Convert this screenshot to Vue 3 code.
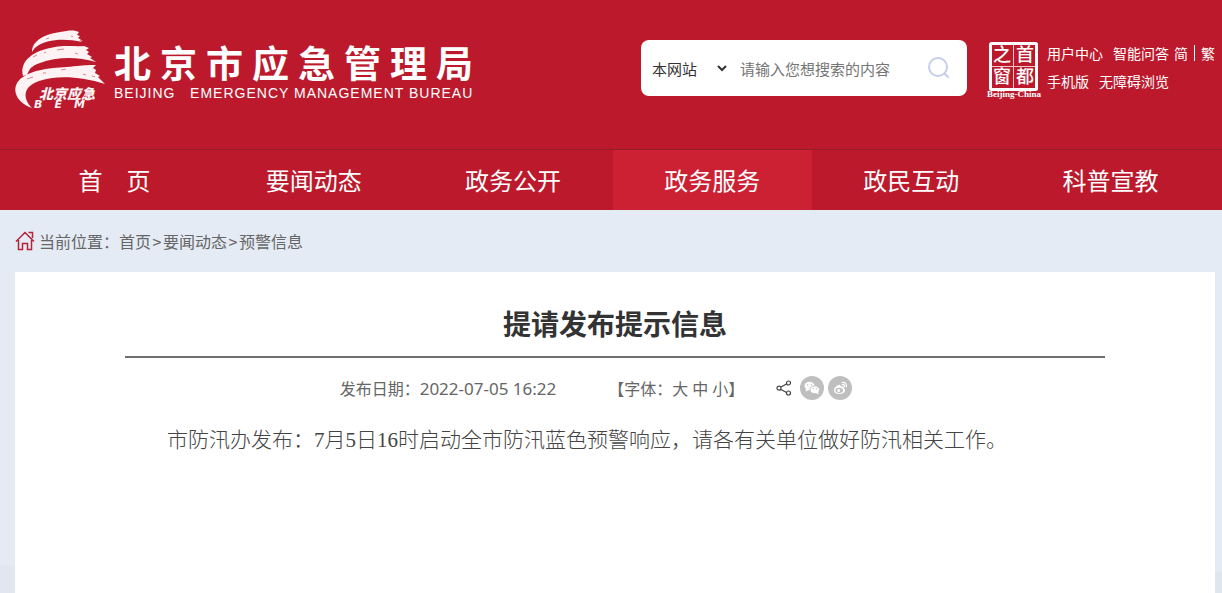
<script setup>
import { ref } from 'vue'

const navItems = ['首\u3000页', '要闻动态', '政务公开', '政务服务', '政民互动', '科普宣教']
const activeItem = '政务服务'
const keyword = ref('')
const scope = ref('site')
</script>

<template>
  <div class="page">
    <header class="header">
      <div class="wrap masthead">
        <a class="brand" href="#">
          <svg class="emblem" viewBox="0 0 90 80" aria-hidden="true">
            <path d="M17 22C17 10 31 4 45 2C52 1 56 0 61 1L64 2L62 5L65 6L63 8L68 11L64 10L67 12C50 8 31 9 21 17C19 19 18 20 17 22Z" />
            <path d="M8 46C4 30 20 20 40 17C51 15 60 17 69 16L74 18L71 20L74 22L72 24L77 27L75 28L81 32C61 26 41 27 25 33C13 37 14 42 12 45Z" />
            <path d="M17 78C-1 72-5 55 8 47C23 37 45 38 62 36C70 35 75 35 81 35L78 38L81 40L80 43L85 46L83 47L90 54C66 46 40 45 24 51C7 57 8 69 17 78Z" />
            <path class="scratches" d="M31 9L34 8M56 6L58 7M18 27L22 25M29 23L31 22M42 20L49 19M60 23L63 24M12 49L18 47M28 43L31 43M46 40L51 39M68 44L71 45M77 46L80 47" />
            <text class="emblem-cn" x="24" y="69">北京应急</text>
            <text class="emblem-en" x="19" y="78">BEM</text>
          </svg>
          <span class="brand-text">
            <span class="brand-cn">北京市应急管理局</span>
            <span class="brand-en">BEIJING &nbsp; EMERGENCY MANAGEMENT BUREAU</span>
          </span>
        </a>

        <form class="search" role="search" @submit.prevent>
          <select v-model="scope" class="scope" aria-label="搜索范围">
            <option value="site">本网站</option>
          </select>
          <input v-model="keyword" class="keyword" type="text" placeholder="请输入您想搜索的内容" aria-label="搜索内容" />
          <button class="search-btn" type="submit" aria-label="搜索">
            <svg viewBox="0 0 24 24" width="24" height="24">
              <circle cx="11" cy="11" r="9" />
              <path d="M17.500 17.500L21 21" />
            </svg>
          </button>
        </form>

        <a class="seal" href="#" aria-label="首都之窗">
          <svg viewBox="0 0 56 60" width="56" height="60">
            <rect x="4.500" y="3.500" width="46" height="46" rx="1" class="frame" />
            <path d="M27.500 5V48M6 26.500H49" class="cross" />
            <g class="seal-cn">
              <text x="16" y="21">之</text>
              <text x="39" y="21">首</text>
              <text x="16" y="43">窗</text>
              <text x="39" y="43">都</text>
            </g>
            <text class="seal-en" x="28" y="57">Beijing-China</text>
          </svg>
        </a>

        <div class="tools">
          <div class="tool-row">
            <a href="#">用户中心</a>
            <a href="#" class="spaced">智能问答</a>
            <span class="lang"><a href="#">简</a><i class="bar"></i><a href="#">繁</a></span>
          </div>
          <div class="tool-row">
            <a href="#">手机版</a>
            <a href="#" class="spaced">无障碍浏览</a>
          </div>
        </div>
      </div>

      <nav class="nav">
        <div class="wrap nav-list">
          <a v-for="item in navItems" :key="item" href="#" :class="{ active: item === activeItem }">{{ item }}</a>
        </div>
      </nav>
    </header>

    <main class="wrap main">
      <div class="crumbs">
        <svg viewBox="0 0 20 20" width="20" height="20" aria-hidden="true">
          <path d="M1 10.500L10 1.500L19 10.500M3.500 9V18.500H7.500V12.500H12.500V18.500H16.500V9M13.500 1.500H17.500V7" />
        </svg>
        <span>当前位置：</span>
        <a href="#">首页</a><span class="sep">&gt;</span><a href="#">要闻动态</a><span class="sep">&gt;</span><a href="#">预警信息</a>
      </div>

      <article class="article">
        <h1>提请发布提示信息</h1>
        <div class="meta">
          <span class="date">发布日期：<time>2022-07-05 16:22</time></span>
          <span class="sizes">【字体：<button type="button">大</button><button type="button">中</button><button type="button">小</button>】</span>
          <span class="share">
            <svg class="share-icon" viewBox="0 0 16 16" width="16" height="16" aria-hidden="true">
              <path d="M5 7L10.500 4M5 9.500L10.500 12.500" />
              <circle cx="3" cy="8.200" r="2" />
              <circle cx="12.500" cy="3" r="2" />
              <circle cx="12.500" cy="13" r="2" />
            </svg>
            <button type="button" class="round" aria-label="分享到微信">
              <svg viewBox="0 0 24 24" width="24" height="24">
                <ellipse cx="9.500" cy="10" rx="5" ry="4.200" />
                <path d="M6 13L5.500 15.500L9 14Z" />
                <ellipse cx="14.800" cy="13.800" rx="4.800" ry="4" class="front" />
                <path d="M16 17L18.500 18.500L18 15.500Z" />
                <g class="eyes">
                  <circle cx="7.700" cy="8.800" r=".7" />
                  <circle cx="11.500" cy="8.800" r=".7" />
                  <circle cx="13.200" cy="12.700" r=".6" />
                  <circle cx="16.500" cy="12.700" r=".6" />
                </g>
              </svg>
            </button>
            <button type="button" class="round" aria-label="分享到微博">
              <svg viewBox="0 0 24 24" width="24" height="24">
                <path d="M6 14.500C6 11.500 10.500 7.500 12.300 9C13 9.500 12.500 10.500 12.500 10.800C14.500 10 16.200 10.200 15.500 12.200C19 13.200 17 18 11.500 18C8 18 6 16.500 6 14.500Z" />
                <ellipse cx="11.200" cy="14.300" rx="3.800" ry="2.600" class="gray" />
                <circle cx="10.700" cy="14.500" r="1.500" />
                <path d="M14 6.500C17 5.800 19.200 8.200 18.200 11M14.300 8.500C16 8.300 16.800 9.300 16.400 10.700" class="wave" />
              </svg>
            </button>
          </span>
        </div>
        <p>市防汛办发布：7月5日16时启动全市防汛蓝色预警响应，请各有关单位做好防汛相关工作。</p>
      </article>
    </main>
  </div>
</template>

<style>
body {
  background: #e4ebf4;
}
</style>

<style scoped>
.page {
  min-height: 100vh;
  display: flex;
  flex-direction: column;
  color: #666;
  font-family: "Noto Sans CJK SC", sans-serif;
  font-size: 16px;
}

.page * {
  box-sizing: border-box;
}

a {
  color: inherit;
  text-decoration: none;
}

button,
select,
input {
  font-family: inherit;
  border: 0;
  background: none;
  color: inherit;
}

button {
  padding: 0;
  cursor: pointer;
}

svg {
  display: block;
  flex: none;
}

.wrap {
  width: 100%;
  max-width: 1222px;
  margin: 0 auto;
  padding: 0 7px 0 15px;
}

.header {
  background: #bc1a2c;
  color: #fff;
}

.masthead {
  display: flex;
  align-items: flex-start;
  height: 149px;
}

.brand {
  display: flex;
  margin-top: 30px;
}

.emblem {
  width: 90px;
  height: 80px;
  overflow: visible;
  fill: #fdf3f4;
}

.scratches {
  stroke: #bc1a2c;
  stroke-width: 0.5;
  fill: none;
}

.emblem-cn {
  font-size: 14px;
  font-weight: 900;
  font-style: italic;
}

.emblem-en {
  font: italic bold 11px "DejaVu Sans", sans-serif;
  letter-spacing: 12px;
}

.brand-text {
  display: flex;
  flex-direction: column;
  margin: 10px 0 0 9px;
  white-space: nowrap;
}

.brand-cn {
  font-size: 37px;
  font-weight: 700;
  line-height: 44px;
  letter-spacing: 9px;
}

.brand-en {
  font: 14px/18px "Liberation Sans", sans-serif;
  letter-spacing: 1px;
}

.search {
  display: flex;
  align-items: center;
  width: 326px;
  height: 56px;
  margin: 40px 0 0 auto;
  padding: 0 16px 0 7px;
  background: #fff;
  border-radius: 8px;
}

.scope {
  width: 82px;
  height: 30px;
  color: #333;
  font-size: 15px;
}

.keyword {
  flex: 1;
  min-width: 0;
  height: 30px;
  padding: 0 10px;
  color: #333;
  font-size: 15px;
}

.keyword::placeholder {
  color: #757575;
}

.search-btn svg {
  fill: none;
  stroke: #c5cdea;
  stroke-width: 2;
  stroke-linecap: round;
}

.seal {
  margin: 40px 0 0 19px;
}

.frame {
  fill: none;
  stroke: #fff;
  stroke-width: 3;
}

.cross {
  stroke: #f3c9ce;
  stroke-width: 1;
}

.seal-cn {
  fill: #fff;
  font-size: 18px;
  font-weight: 500;
  text-anchor: middle;
}

.seal-en {
  fill: #fff;
  font: bold 9px "Liberation Serif", serif;
  text-anchor: middle;
}

.tools {
  margin: 39px 0 0 5px;
  font-size: 14px;
  line-height: 28px;
  white-space: nowrap;
}

.tool-row {
  display: flex;
}

.spaced {
  margin-left: 10px;
}

.lang {
  display: flex;
  align-items: center;
  gap: 6px;
  margin-left: 5px;
}

.bar {
  width: 1px;
  height: 16px;
  background: #fff;
}

.nav {
  border-top: 1px solid #951d27;
}

.nav-list {
  display: flex;
}

.nav-list a {
  flex: 0 0 16.6%;
  font-size: 24px;
  line-height: 60px;
  text-align: center;
}

.nav-list .active {
  background: #cc2133;
}

.main {
  flex: 1;
  display: flex;
  flex-direction: column;
  background:
    linear-gradient(#e0e6ee, #e0e6ee) right 362px / 7px 100% no-repeat,
    radial-gradient(circle at 0 400px, #e0e7f0 45px, #e4ebf4 46px);
}

.crumbs {
  display: flex;
  align-items: center;
  height: 62px;
}

.crumbs svg {
  margin-right: 4px;
  fill: none;
  stroke: #b5223a;
  stroke-width: 1.5;
}

.sep {
  width: 12px;
  text-align: center;
}

.article {
  flex: 1;
  padding: 30px 110px 40px;
  background: #fff;
}

h1 {
  margin: 0;
  padding-bottom: 12px;
  border-bottom: 2px solid #706e71;
  color: #333;
  font-size: 28px;
  line-height: 42px;
  text-align: center;
}

.meta {
  display: flex;
  align-items: center;
  justify-content: center;
  height: 60px;
  padding-right: 38px;
}

time {
  font-family: "Noto Sans", sans-serif;
  font-size: 17px;
}

.sizes {
  display: flex;
  margin-left: 52px;
}

.sizes button {
  margin-right: 4px;
  font-size: 16px;
}

.sizes button:last-of-type {
  margin-right: 0;
}

.share {
  display: flex;
  align-items: center;
  gap: 4px;
  margin-left: 32px;
}

.share-icon {
  margin-right: 4px;
  fill: none;
  stroke: #444;
  stroke-width: 1.2;
}

.round {
  border-radius: 50%;
  background: #bfbfbf;
}

.round svg {
  fill: #fff;
}

.front {
  stroke: #bfbfbf;
  stroke-width: 1;
}

.eyes,
.gray {
  fill: #bfbfbf;
}

.wave {
  fill: none;
  stroke: #fff;
  stroke-width: 1.2;
  stroke-linecap: round;
}

p {
  margin: 4px 0 0;
  color: #444;
  font-family: "Liberation Serif", "Noto Sans CJK SC", serif;
  font-size: 21px;
  font-weight: 300;
  line-height: 36px;
  text-indent: 2em;
}
</style>
